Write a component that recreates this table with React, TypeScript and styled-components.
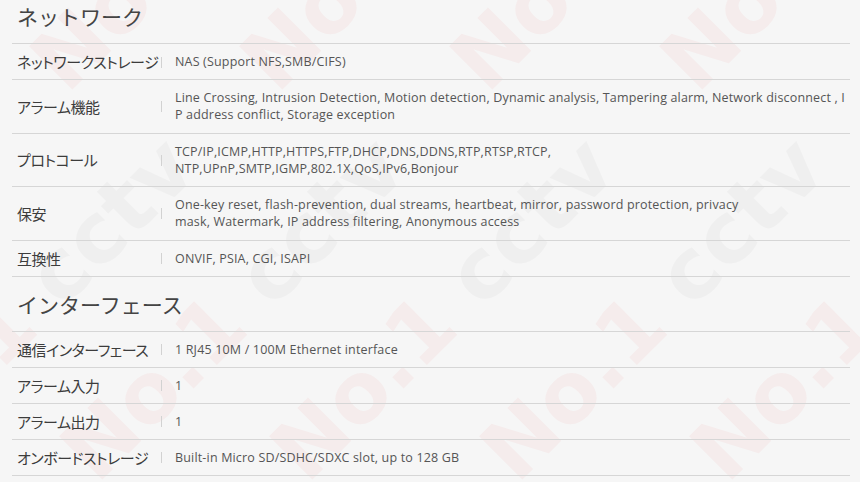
import React from "react";
import styled, { createGlobalStyle } from "styled-components";

const GlobalStyle = createGlobalStyle`
  html, body {
    margin: 0;
    padding: 0;
    background: #f6f6f6;
  }
  body {
    font-family: "Open Sans", "Noto Sans CJK JP", sans-serif;
    overflow: hidden;
  }
`;

const Page = styled.div`
  position: relative;
  width: 860px;
  height: 482px;
  overflow: hidden;
  background: #f6f6f6;
`;

const Watermark = styled.svg`
  position: absolute;
  left: 0;
  top: 0;
  pointer-events: none;
  z-index: 0;
`;

const Content = styled.div`
  position: relative;
  z-index: 1;
  margin: -11px 10px 0 12px;
`;

const Heading = styled.h2`
  margin: 0;
  height: 54px;
  display: flex;
  align-items: center;
  padding-left: 5px;
  border-bottom: 1px solid #d6d6d6;
  font-family: "Noto Sans CJK JP", sans-serif;
  font-size: 21px;
  font-weight: 400;
  color: #444;
`;

const Row = styled.div`
  display: grid;
  grid-template-columns: 149px 1fr;
  align-items: center;
  border-bottom: 1px solid #d6d6d6;
`;

const Label = styled.div`
  padding-left: 5px;
  font-family: "Noto Sans CJK JP", sans-serif;
  font-feature-settings: "palt";
  font-size: 15px;
  letter-spacing: -0.45px;
  color: #3c3c3c;
  white-space: nowrap;
`;

const Value = styled.div<{ $lines: number }>`
  position: relative;
  padding: 9px 0 ${(p) => (p.$lines > 1 ? "9.5px" : "9px")} 14px;
  font-family: "Open Sans", sans-serif;
  font-size: 12.5px;
  letter-spacing: 0.17px;
  line-height: 17px;
  color: #555;
  white-space: nowrap;

  &::before {
    content: "";
    position: absolute;
    left: 0;
    top: 50%;
    width: 1px;
    height: 11px;
    margin-top: -5px;
    background: #d2d2d2;
  }
`;

type Spec = { label: string; lines: string[] };

const network: Spec[] = [
  { label: "ネットワークストレージ", lines: ["NAS (Support NFS,SMB/CIFS)"] },
  {
    label: "アラーム機能",
    lines: [
      "Line Crossing, Intrusion Detection, Motion detection, Dynamic analysis, Tampering alarm, Network disconnect , I",
      "P address conflict, Storage exception",
    ],
  },
  {
    label: "プロトコール",
    lines: [
      "TCP/IP,ICMP,HTTP,HTTPS,FTP,DHCP,DNS,DDNS,RTP,RTSP,RTCP,",
      "NTP,UPnP,SMTP,IGMP,802.1X,QoS,IPv6,Bonjour",
    ],
  },
  {
    label: "保安",
    lines: [
      "One-key reset, flash-prevention, dual streams, heartbeat, mirror, password protection, privacy",
      "mask, Watermark, IP address filtering, Anonymous access",
    ],
  },
  { label: "互換性", lines: ["ONVIF, PSIA, CGI, ISAPI"] },
];

const iface: Spec[] = [
  { label: "通信インターフェース", lines: ["1 RJ45 10M / 100M Ethernet interface"] },
  { label: "アラーム入力", lines: ["1"] },
  { label: "アラーム出力", lines: ["1"] },
  { label: "オンボードストレージ", lines: ["Built-in Micro SD/SDHC/SDXC slot, up to 128 GB"] },
];

function SpecRow({ spec }: { spec: Spec }) {
  return (
    <Row>
      <Label>{spec.label}</Label>
      <Value $lines={spec.lines.length}>
        {spec.lines.map((l, i) => (
          <div key={i}>{l}</div>
        ))}
      </Value>
    </Row>
  );
}

function Marks() {
  const items: { x: number; y: number }[] = [];
  for (let m = -1; m <= 2; m++) {
    for (let k = -5; k <= 5; k++) {
      const x = 517 + k * 210 + m * 390;
      const y = 485 - m * 390;
      if (x + y < 0 || x + y > 1500) continue;
      items.push({ x, y });
    }
  }
  return (
    <Watermark width={860} height={482} viewBox="0 0 860 482">
      {items.map((p, i) => (
        <text
          key={i}
          transform={`translate(${p.x} ${p.y}) rotate(-45)`}
          fontFamily="DejaVu Sans, sans-serif"
          fontWeight="bold"
          fontSize={84}
        >
          <tspan fill="rgba(232,50,50,0.05)">No.1 </tspan>
          <tspan fill="rgba(0,0,0,0.028)">cctv</tspan>
        </text>
      ))}
    </Watermark>
  );
}

export default function App() {
  return (
    <Page>
      <GlobalStyle />
      <Marks />
      <Content>
        <Heading>ネットワーク</Heading>
        {network.map((s) => (
          <SpecRow key={s.label} spec={s} />
        ))}
        <Heading>インターフェース</Heading>
        {iface.map((s) => (
          <SpecRow key={s.label} spec={s} />
        ))}
      </Content>
    </Page>
  );
}
